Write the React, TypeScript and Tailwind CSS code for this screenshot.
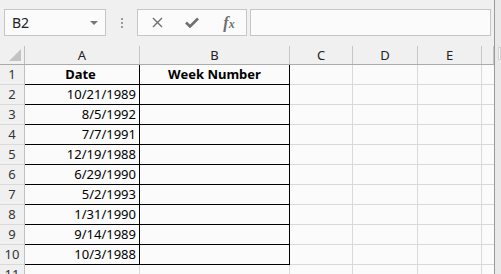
import React from 'react';

const cols = [
  { label: 'A', w: 'w-[115px]' },
  { label: 'B', w: 'w-[150px]' },
  { label: 'C', w: 'w-[63px]' },
  { label: 'D', w: 'w-[65px]' },
  { label: 'E', w: 'w-[64px]' },
  { label: '', w: 'w-[12px]' },
];

const dates = [
  '10/21/1989',
  '8/5/1992',
  '7/7/1991',
  '12/19/1988',
  '6/29/1990',
  '5/2/1993',
  '1/31/1990',
  '9/14/1989',
  '10/3/1988',
];

const Toolbar: React.FC = () => (
  <div className="flex h-[46px] shrink-0 items-start pt-[9px] pl-[4px] pr-[3px]">
    {/* name box */}
    <div className="flex h-[27px] w-[102px] items-center justify-between border border-[#c6c6c6] bg-[#fbfbfb] pl-[7px] pr-[7px] text-[14px] text-[#222]">
      <span>B2</span>
      <svg width="8" height="4" viewBox="0 0 8 4">
        <path d="M0 0 L8 0 L4 4 Z" fill="#777" />
      </svg>
    </div>
    {/* dotted grip */}
    <div className="flex w-[31px] flex-col items-center gap-[2px] pt-[9px]">
      <span className="h-[2px] w-[2px] bg-[#9a9a9a]" />
      <span className="h-[2px] w-[2px] bg-[#9a9a9a]" />
      <span className="h-[2px] w-[2px] bg-[#9a9a9a]" />
    </div>
    {/* cancel / enter / fx */}
    <div className="flex h-[27px] w-[110px] items-center border border-[#c6c6c6] bg-[#fbfbfb]">
      <div className="flex w-[36px] justify-center pl-[2px]">
        <svg width="11" height="11" viewBox="0 0 11 11">
          <path d="M1 1 L10 10 M10 1 L1 10" stroke="#6f6f6f" strokeWidth="1.4" />
        </svg>
      </div>
      <div className="flex w-[36px] justify-center">
        <svg width="14" height="11" viewBox="0 0 14 11">
          <path d="M1 5.5 L5 9.5 L13 1.5" stroke="#6f6f6f" strokeWidth="2.6" fill="none" />
        </svg>
      </div>
      <div className="flex w-[36px] items-center justify-center pl-[2px] font-['Liberation_Serif',serif] text-[16px] font-bold italic leading-none text-[#6f6f6f]">
        <span>f</span>
        <span className="mt-[3px] text-[12px]">x</span>
      </div>
    </div>
    {/* formula input */}
    <div className="ml-[3px] h-[27px] flex-1 border border-[#c6c6c6] bg-[#fbfbfb]" />
  </div>
);

const App: React.FC = () => {
  return (
    <div className="flex h-[274px] w-[501px] overflow-hidden bg-[#f0f0f0] font-['Noto_Sans',sans-serif]">
      <div className="flex w-[494px] flex-col">
        <Toolbar />

        {/* column headers */}
        <div className="flex h-[19px] shrink-0 border-b border-[#ababab] text-[13px] text-[#222]">
          <div className="relative w-[25px] border-r border-[#c0c0c0]">
            <svg className="absolute right-[3px] bottom-[3px]" width="12" height="12" viewBox="0 0 12 12">
              <path d="M12 0 L12 12 L0 12 Z" fill="#c3c3c3" />
            </svg>
          </div>
          {cols.map((c, i) => (
            <div
              key={i}
              className={`${c.w} flex items-center justify-center border-r border-[#c6c6c6] leading-none`}
            >
              {c.label}
            </div>
          ))}
        </div>

        {/* rows */}
        <div className="flex shrink-0 flex-col bg-[#fbfbfb] text-[13px] text-black">
          {Array.from({ length: 11 }).map((_, r) => {
            const rowNum = r + 1;
            const inTable = rowNum <= 10;
            const tableBorder = inTable ? 'border-b-black' : 'border-b-[#d9d9d9]';
            return (
              <div key={r} className="flex h-[20px] shrink-0">
                <div className="flex w-[25px] items-center justify-center border-r border-b border-r-[#c0c0c0] border-b-[#d9d9d9] bg-[#f0f0f0] text-[13px] text-[#333] leading-none">
                  {rowNum}
                </div>
                <div
                  className={`flex w-[115px] items-center border-b border-r pr-[3px] leading-none ${tableBorder} ${
                    inTable ? 'border-r-black' : 'border-r-[#d9d9d9]'
                  } ${rowNum === 1 ? 'justify-center font-bold' : 'justify-end'}`}
                >
                  {rowNum === 1 ? 'Date' : inTable ? dates[rowNum - 2] : ''}
                </div>
                <div
                  className={`flex w-[150px] items-center justify-center border-b border-r font-bold leading-none ${tableBorder} ${
                    inTable ? 'border-r-black' : 'border-r-[#d9d9d9]'
                  }`}
                >
                  {rowNum === 1 ? 'Week Number' : ''}
                </div>
                <div className="w-[63px] border-b border-r border-[#d9d9d9]" />
                <div className="w-[65px] border-b border-r border-[#d9d9d9]" />
                <div className="w-[64px] border-b border-r border-[#d9d9d9]" />
                <div className="w-[12px] border-b border-[#d9d9d9]" />
              </div>
            );
          })}
        </div>
      </div>

      {/* right scrollbar strip */}
      <div className="flex flex-1 flex-col border-l border-[#9a9a9a] bg-[#e9e9e9] pt-[47px] pl-[3px]">
        <div className="h-[13px] w-full border border-[#d0d0d0] bg-[#fafafa]" />
      </div>
    </div>
  );
};

export default App;
